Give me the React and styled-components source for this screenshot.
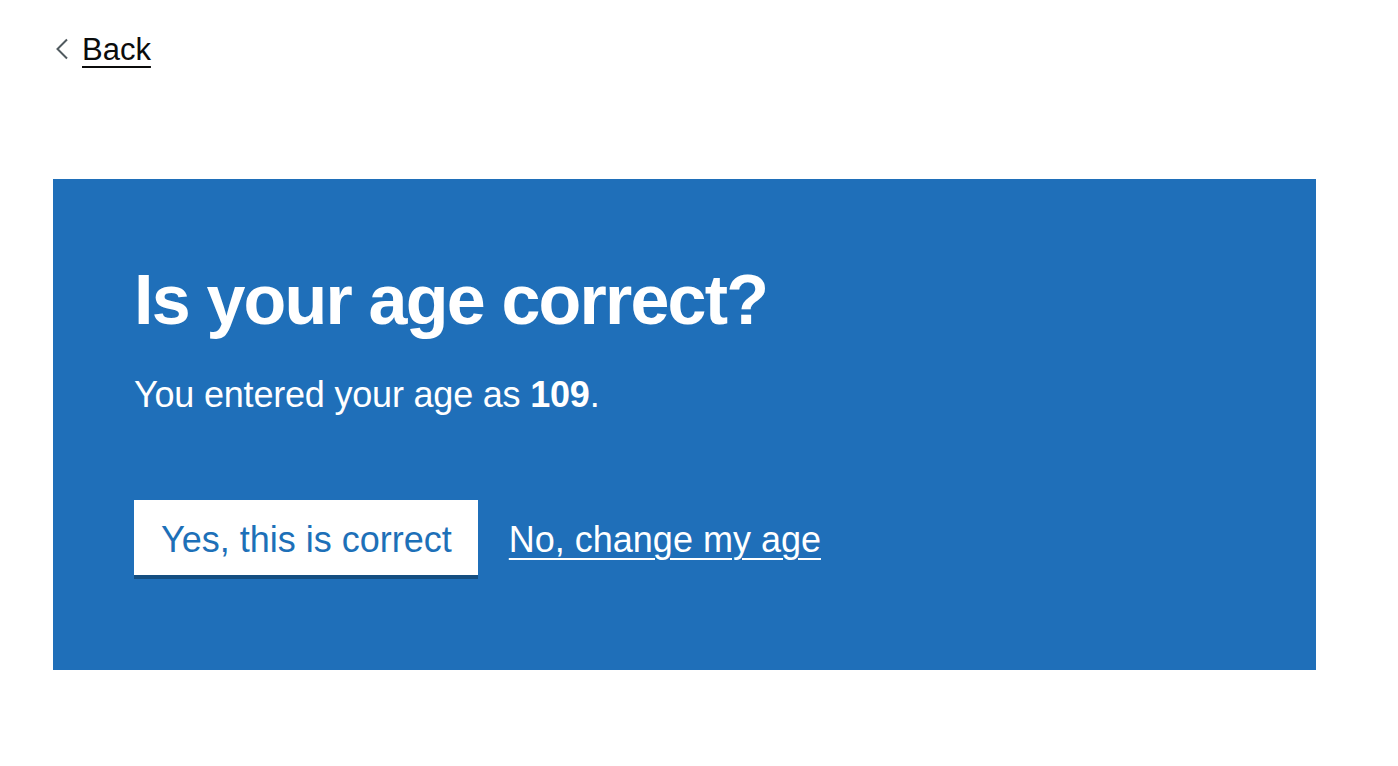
import React from "react";
import styled, { createGlobalStyle } from "styled-components";

const GlobalStyle = createGlobalStyle`
  html, body {
    margin: 0;
    padding: 0;
    background: #ffffff;
    font-family: "Liberation Sans", Arial, sans-serif;
    color: #0b0c0c;
  }
`;

const Page = styled.div`
  padding: 0 0 0 53px;
  width: 1263px;
`;

const BackLink = styled.a`
  display: inline-flex;
  align-items: center;
  gap: 13px;
  margin-top: 31px;
  padding-left: 2px;
  font-size: 31px;
  line-height: 37.5px;
  color: #0b0c0c;
  text-decoration: underline;
  text-decoration-thickness: 2px;
  text-underline-offset: 6px;
  cursor: pointer;

  svg {
    flex: none;
    margin-top: -2px;
  }
`;

const Panel = styled.section`
  margin-top: 110px;
  background: #1f6fb9;
  color: #ffffff;
  padding: 83px 81px 95px;
`;

const Title = styled.h1`
  margin: 0 0 33px;
  font-size: 70px;
  line-height: 77px;
  font-weight: 700;
  letter-spacing: -1.8px;
`;

const Body = styled.p`
  margin: 0 0 83px;
  font-size: 36px;
  line-height: 45px;
  letter-spacing: -0.2px;

  strong {
    font-weight: 700;
  }
`;

const Actions = styled.div`
  display: flex;
  align-items: flex-start;
  gap: 31px;
`;

const Button = styled.button`
  border: 0;
  background: #ffffff;
  color: #1d70b8;
  font-family: inherit;
  font-size: 36px;
  line-height: 45px;
  padding: 17px 26px 13px 27px;
  box-shadow: 0 4px 0 #144e81;
  cursor: pointer;
`;

const TextLink = styled.a`
  margin-top: 17px;
  font-size: 36px;
  line-height: 45px;
  color: #ffffff;
  text-decoration: underline;
  text-decoration-thickness: 2px;
  text-underline-offset: 6px;
  cursor: pointer;
`;

export default function App() {
  return (
    <>
      <GlobalStyle />
      <Page>
        <BackLink>
          <svg width="14" height="22" viewBox="0 0 14 22" fill="none">
            <polyline
              points="12,1.5 2.5,11 12,20.5"
              stroke="#505a5f"
              strokeWidth="2"
            />
          </svg>
          Back
        </BackLink>
        <Panel>
          <Title>Is your age correct?</Title>
          <Body>
            You entered your age as <strong>109</strong>.
          </Body>
          <Actions>
            <Button>Yes, this is correct</Button>
            <TextLink>No, change my age</TextLink>
          </Actions>
        </Panel>
      </Page>
    </>
  );
}
